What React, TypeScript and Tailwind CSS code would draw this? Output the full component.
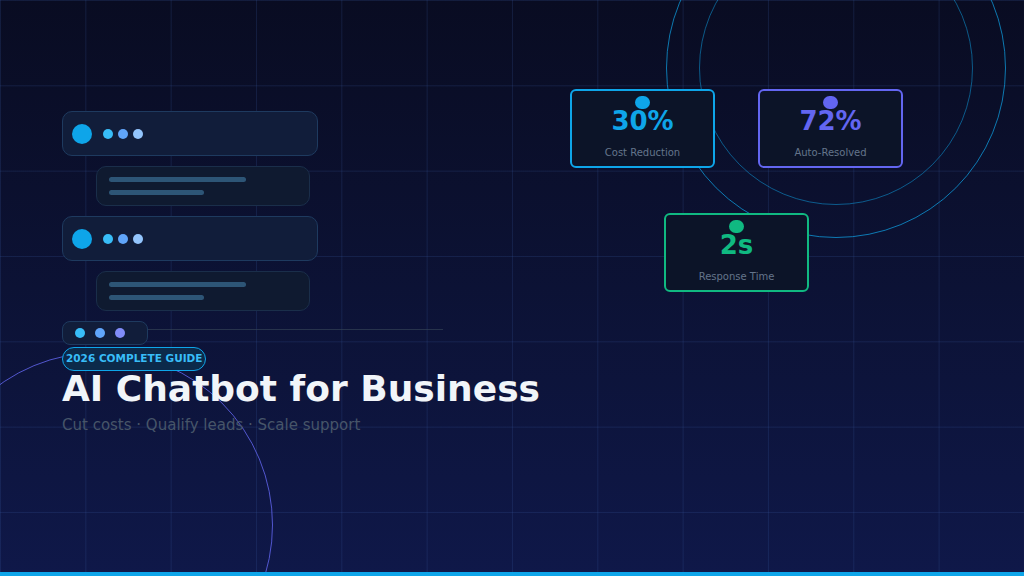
export default function App() {
  const font = { fontFamily: '"DejaVu Sans", Verdana, sans-serif' };
  const stats = [
    { v: "30%", l: "Cost Reduction", pos: "left-[570px] top-[89px]", b: "border-[#0ea5e9]", t: "text-[#0ea5e9]", d: "bg-[#0ea5e9]" },
    { v: "72%", l: "Auto-Resolved", pos: "left-[758px] top-[89px]", b: "border-[#6366f1]", t: "text-[#6366f1]", d: "bg-[#6366f1]" },
    { v: "2s", l: "Response Time", pos: "left-[664px] top-[213px]", b: "border-[#10b981]", t: "text-[#10b981]", d: "bg-[#10b981]" },
  ];
  const Msg = () => (
    <>
      <div className="h-[45px] w-[256px] rounded-[10px] border border-[#1e3a5f] bg-[#111d3a] flex items-center pl-[9px] gap-[11px]">
        <div className="w-[20px] h-[20px] rounded-full bg-[#0ea5e9]" />
        <div className="flex gap-[5px]">
          <div className="w-[10px] h-[10px] rounded-full bg-[#38bdf8]" />
          <div className="w-[10px] h-[10px] rounded-full bg-[#60a5fa]" />
          <div className="w-[10px] h-[10px] rounded-full bg-[#93c5fd]" />
        </div>
      </div>
      <div className="ml-[34px] mt-[10px] mb-[10px] h-[40px] w-[214px] rounded-[10px] border border-[#1a2e4a] bg-[#0f1a30] flex flex-col justify-center gap-[8px] pl-[12px]">
        <div className="h-[5px] w-[137px] rounded-full bg-[#2d5576]" />
        <div className="h-[5px] w-[95px] rounded-full bg-[#2d5576]" />
      </div>
    </>
  );
  return (
    <div style={font} className="relative w-[1024px] h-[576px] overflow-hidden bg-gradient-to-b from-[#090c22] to-[#0f1849]">
      <div className="absolute inset-0 bg-[linear-gradient(to_right,rgba(56,90,160,0.22)_1px,transparent_1px),linear-gradient(to_bottom,rgba(56,90,160,0.22)_1px,transparent_1px)] bg-[size:85.33px_85.33px] bg-[position:0_0]" />
      <div className="absolute left-[666px] top-[-102px] w-[340px] h-[340px] rounded-full border border-[#0ea5e9]/70" />
      <div className="absolute left-[699px] top-[-69px] w-[274px] h-[274px] rounded-full border border-[#0ea5e9]/50" />
      <div className="absolute left-[-73px] top-[352px] w-[346px] h-[346px] rounded-full border border-[#6366f1]/80" />
      <div className="absolute left-[147px] top-[329px] w-[296px] h-px bg-[#334155]/70" />

      {stats.map((s) => (
        <div key={s.v} className={`absolute ${s.pos} w-[145px] h-[79px] rounded-[6px] border-2 ${s.b} bg-[#0c1428] flex flex-col items-center`}>
          <div className={`mt-[5px] w-[15px] h-[13px] rounded-full ${s.d}`} />
          <div className={`text-[26px] font-bold leading-none -mt-[1px] ${s.t}`}>{s.v}</div>
          <div className="mt-[11px] text-[10px] text-[#64748b]">{s.l}</div>
        </div>
      ))}

      <div className="relative pl-[62px] pt-[111px]">
        <Msg />
        <Msg />
        <div className="h-[24px] w-[86px] rounded-[8px] border border-[#1e3a5f] bg-[#111d3a] flex items-center pl-[12px] gap-[10px]">
          <div className="w-[10px] h-[10px] rounded-full bg-[#38bdf8]" />
          <div className="w-[10px] h-[10px] rounded-full bg-[#60a5fa]" />
          <div className="w-[10px] h-[10px] rounded-full bg-[#818cf8]" />
        </div>
        <div className="-mt-[7px] inline-flex h-[24px] items-center px-[3px] rounded-full border border-[#0ea5e9] bg-[#0c2a4a] text-[10.5px] font-bold text-[#38bdf8]">
          2026 COMPLETE GUIDE
        </div>
        <div className="-mt-[2px] text-[36px] font-bold leading-[40px] text-[#f1f5f9]">AI Chatbot for Business</div>
        <div className="mt-[5px] text-[15px] text-[#475569]">Cut costs · Qualify leads · Scale support</div>
      </div>
      <div className="absolute left-0 bottom-0 w-full h-[4px] bg-[#0ea5e9]" />
    </div>
  );
}
